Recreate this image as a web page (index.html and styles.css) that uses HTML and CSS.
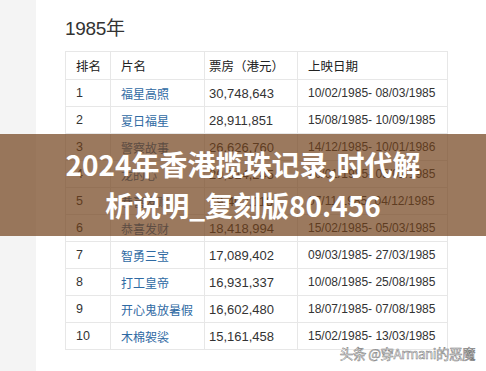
FILE: index.html
```html
<!DOCTYPE html>
<html lang="zh">
<head>
<meta charset="utf-8">
<link rel="stylesheet" href="styles.css">
</head>
<body>
<div class="page">
  <aside class="side"></aside>
  <main class="main">
    <h2 class="year">1985年</h2>
    <table class="box">
      <colgroup>
        <col class="c1"><col class="c2"><col class="c3"><col class="c4">
      </colgroup>
      <thead>
        <tr><th>排名</th><th>片名</th><th class="num">票房（港元）</th><th>上映日期</th></tr>
      </thead>
      <tbody>
        <tr><td>1</td><td><a>福星高照</a></td><td class="num">30,748,643</td><td class="date">10/02/1985- 08/03/1985</td></tr>
        <tr><td>2</td><td><a>夏日福星</a></td><td class="num">28,911,851</td><td class="date">15/08/1985- 10/09/1985</td></tr>
        <tr><td>3</td><td><a>警察故事</a></td><td class="num">26,626,760</td><td class="date">14/12/1985- 10/01/1986</td></tr>
        <tr><td>4</td><td><a>龙的心</a></td><td class="num">20,314,245</td><td class="date">20/01/1985- 05/02/1985</td></tr>
        <tr><td>5</td><td><a>恭喜发财</a></td><td class="num">19,402,118</td><td class="date">07/11/1985- 04/12/1985</td></tr>
        <tr><td>6</td><td><a>恭喜发财</a></td><td class="num">18,418,994</td><td class="date">15/02/1985- 05/03/1985</td></tr>
        <tr><td>7</td><td><a>智勇三宝</a></td><td class="num">17,089,402</td><td class="date">09/03/1985- 27/03/1985</td></tr>
        <tr><td>8</td><td><a>打工皇帝</a></td><td class="num">16,931,337</td><td class="date">10/08/1985- 25/08/1985</td></tr>
        <tr><td>9</td><td><a>开心鬼放暑假</a></td><td class="num">16,602,480</td><td class="date">18/07/1985- 07/08/1985</td></tr>
        <tr><td>10</td><td><a>木棉袈裟</a></td><td class="num">15,161,458</td><td class="date">15/02/1985- 13/03/1985</td></tr>
      </tbody>
    </table>
  </main>
</div>
<div class="banner">
  <p class="banner-text">2024年香港揽珠记录,时代解<br>析说明_复刻版80.456</p>
</div>
<div class="mark">头条 @穿Armani的恶魔</div>
</body>
</html>
```
FILE: styles.css
```css
html, body {
  margin: 0;
  padding: 0;
  background: #ffffff;
}
body {
  width: 486px;
  height: 371px;
  overflow: hidden;
  position: relative;
  font-family: "Liberation Sans", "Noto Sans CJK SC", sans-serif;
  color: #333333;
}
.page {
  display: flex;
  height: 371px;
}
.side {
  width: 36px;
  flex: none;
  background: #f4f4f4;
}
.main {
  flex: 1;
  padding: 15px 0 0 29px;
}
.year {
  margin: 0 0 9px;
  font-weight: normal;
  font-size: 19px;
  line-height: 27px;
  color: #333333;
  letter-spacing: -0.3px;
}
.box {
  border-collapse: collapse;
  width: 382px;
  table-layout: fixed;
  font-size: 12px;
}
.c1 { width: 45px; }
.c2 { width: 94px; }
.c3 { width: 93px; }
.c4 { width: 150px; }
.box th, .box td {
  border: 1px solid #e7e7e7;
  padding: 0 0 0 10px;
  text-align: left;
  white-space: nowrap;
  overflow: hidden;
}
.box th {
  height: 27px;
  font-weight: normal;
  font-size: 12.5px;
  color: #222222;
}
.box td {
  height: 26px;
  font-size: 12.5px;
  color: #333333;
}
.box .num {
  padding-left: 4px;
}
.box td.num {
  font-size: 13px;
}
.box td.date {
  font-size: 12px;
}
.box td a {
  color: #2f6aa3;
  font-size: 12px;
}
.banner {
  position: absolute;
  left: 0;
  top: 134px;
  width: 486px;
  height: 102px;
  background: rgba(112, 64, 26, 0.7);
  display: flex;
  justify-content: center;
  align-items: center;
}
.banner-text {
  margin: 0;
  text-align: center;
  color: #ffffff;
  font-family: "Noto Sans CJK SC", "Noto Sans", sans-serif;
  font-weight: bold;
  font-size: 28px;
  line-height: 41px;
}
.mark {
  position: absolute;
  right: 11px;
  top: 344px;
  font-family: "Noto Sans CJK SC", sans-serif;
  font-size: 13.5px;
  line-height: 18px;
  color: #f4f4f4;
  -webkit-text-stroke: 0.5px #7a7a7a;
  letter-spacing: -0.5px;
}
```
